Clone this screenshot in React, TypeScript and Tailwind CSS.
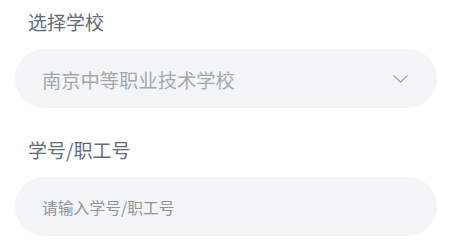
export default function App() {
  return (
    <div
      className="w-[452px] h-[247px] bg-white px-[15px] pt-[9px]"
      style={{ fontFamily: '"Noto Sans CJK SC", "Noto Sans", sans-serif' }}
    >
      <div className="pl-[13px] text-[19px] leading-[26px] text-[#646b77]">选择学校</div>
      <div className="mt-[14px] h-[59px] rounded-full bg-[#f4f5f7] pl-[27px] pr-[29px] flex items-center justify-between">
        <span className="text-[19.3px] leading-[26px] text-[#a4a8ae] pt-[2px]">南京中等职业技术学校</span>
        <svg width="15" height="8" viewBox="0 0 15 8" fill="none" className="mt-[1px]">
          <path d="M1 1l6.5 6L14 1" stroke="#a4a8ae" strokeWidth="1.4" strokeLinecap="round" strokeLinejoin="round" />
        </svg>
      </div>

      <div className="mt-[29px] pl-[13px] text-[19px] leading-[26px] text-[#646b77]">学号/职工号</div>
      <div className="mt-[14px] h-[59px] rounded-full bg-[#f4f5f7] pl-[27px] pr-[29px] flex items-center">
        <input
          className="w-full bg-transparent outline-none text-[15.8px] leading-[22px] pt-[3px] text-[#4b5563] placeholder:text-[#8f949c]"
          placeholder="请输入学号/职工号"
        />
      </div>
    </div>
  );
}
